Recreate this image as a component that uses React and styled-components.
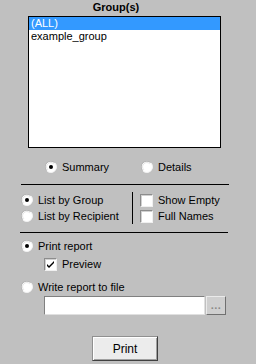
import React from "react";
import styled, { createGlobalStyle } from "styled-components";

const Global = createGlobalStyle`
  html, body { margin: 0; padding: 0; background: #c0c0c0; }
  body { font-family: "Liberation Sans", Arial, sans-serif; font-size: 11px; color: #000; }
`;

const Page = styled.div`
  width: 256px;
  height: 364px;
  background: #c0c0c0;
  display: flex;
  flex-direction: column;
  overflow: hidden;
`;

const Title = styled.div`
  width: 232px;
  height: 16px;
  line-height: 15px;
  text-align: center;
  font-weight: bold;
  font-size: 11px;
`;

const ListBox = styled.div`
  margin-left: 28px;
  width: 193px;
  height: 132px;
  box-sizing: border-box;
  border: 1px solid #000;
  background: #fff;
  display: flex;
  flex-direction: column;
`;

const ListItem = styled.div`
  height: 13px;
  line-height: 13px;
  padding-left: 2px;
  background: ${(p) => (p.$selected ? "#3399ff" : "transparent")};
  color: ${(p) => (p.$selected ? "#fff" : "#000")};
  white-space: nowrap;
`;

const Row = styled.div`
  display: flex;
  align-items: center;
  height: 16px;
  margin-top: ${(p) => p.$mt || 0}px;
  padding-left: ${(p) => p.$pl || 0}px;
`;

const Option = styled.label`
  display: flex;
  align-items: center;
  gap: 5px;
  height: 16px;
  width: ${(p) => (p.$w ? `${p.$w}px` : "auto")};
  white-space: nowrap;
`;

const Separator = styled.div`
  margin-top: ${(p) => p.$mt}px;
  margin-left: ${(p) => p.$ml}px;
  width: 208px;
  height: 1px;
  background: #000;
`;

const Middle = styled.div`
  margin-top: 7px;
  display: flex;
  height: 32px;
`;

const LeftCol = styled.div`
  width: 111px;
  padding-left: 21px;
  display: flex;
  flex-direction: column;
`;

const VLine = styled.div`
  width: 1px;
  height: 32px;
  background: #000;
`;

const RightCol = styled.div`
  padding-left: 7px;
  display: flex;
  flex-direction: column;
`;

const Box = styled.span`
  width: 13px;
  height: 13px;
  box-sizing: border-box;
  flex: none;
  background: #fff;
  border: 1px solid;
  border-color: #8c8c8c #f0f0f0 #f0f0f0 #8c8c8c;
  box-shadow: inset 1px 1px #d0d0d0;
  display: flex;
  align-items: center;
  justify-content: center;
`;

const FieldRow = styled.div`
  display: flex;
  margin-top: 1px;
  margin-left: 44px;
  height: 19px;
  gap: 1px;
`;

const TextField = styled.div`
  width: 161px;
  height: 19px;
  box-sizing: border-box;
  background: #fff;
  border: 1px solid;
  border-color: #808080 #e0e0e0 #e0e0e0 #808080;
`;

const BrowseButton = styled.div`
  width: 20px;
  height: 19px;
  box-sizing: border-box;
  background: #cfcfcf;
  border: 1px solid;
  border-color: #eaeaea #707070 #707070 #eaeaea;
  color: #8a8a8a;
  font-size: 11px;
  line-height: 17px;
  text-align: center;
  font-weight: bold;
  letter-spacing: 0.5px;
`;

const PrintButton = styled.div`
  margin-top: 21px;
  margin-left: 92px;
  width: 66px;
  height: 25px;
  box-sizing: border-box;
  background: #ececec;
  border: 1px solid;
  border-color: #909090 #404040 #404040 #909090;
  box-shadow: inset 1px 1px #fff, inset -1px -1px #a0a0a0;
  display: flex;
  align-items: center;
  justify-content: center;
  font-size: 12px;
`;

function Radio({ checked }) {
  return (
    <svg width="12" height="12" viewBox="0 0 12 12" style={{ flex: "none" }}>
      <circle cx="6" cy="6" r="5.5" fill="#fff" />
      <path d="M1.8 9.8 A5.4 5.4 0 0 1 9.8 1.8" fill="none" stroke="#b4b4b4" strokeWidth="1" />
      <path d="M9.8 1.8 A5.4 5.4 0 0 1 1.8 9.8" fill="none" stroke="#f4f4f4" strokeWidth="1" />
      <path d="M2.8 8.8 A4.2 4.2 0 0 1 8.8 2.8" fill="none" stroke="#e4e4e4" strokeWidth="1" />
      {checked && <circle cx="6" cy="6" r="2" fill="#000" />}
    </svg>
  );
}

function Check({ checked }) {
  return (
    <Box>
      {checked && (
        <svg width="9" height="9" viewBox="0 0 9 9">
          <path d="M1 4 L3 6 L8 1 L8 3 L3 8 L1 6 Z" fill="#000" />
        </svg>
      )}
    </Box>
  );
}

export default function App() {
  return (
    <Page>
      <Global />
      <Title>Group(s)</Title>
      <ListBox>
        <ListItem $selected>(ALL)</ListItem>
        <ListItem>example_group</ListItem>
      </ListBox>

      <Row $mt={11} $pl={45}>
        <Option $w={96}>
          <Radio checked />
          Summary
        </Option>
        <Option>
          <Radio />
          Details
        </Option>
      </Row>

      <Separator $mt={9} $ml={21} />

      <Middle>
        <LeftCol>
          <Option>
            <Radio checked />
            List by Group
          </Option>
          <Option>
            <Radio />
            List by Recipient
          </Option>
        </LeftCol>
        <VLine />
        <RightCol>
          <Option>
            <Check />
            Show Empty
          </Option>
          <Option>
            <Check />
            Full Names
          </Option>
        </RightCol>
      </Middle>

      <Separator $mt={8} $ml={20} />

      <Row $mt={5} $pl={21}>
        <Option>
          <Radio checked />
          Print report
        </Option>
      </Row>
      <Row $mt={2} $pl={44}>
        <Option>
          <Check checked />
          Preview
        </Option>
      </Row>
      <Row $mt={7} $pl={21}>
        <Option>
          <Radio />
          Write report to file
        </Option>
      </Row>
      <FieldRow>
        <TextField />
        <BrowseButton>...</BrowseButton>
      </FieldRow>
      <PrintButton>Print</PrintButton>
    </Page>
  );
}
